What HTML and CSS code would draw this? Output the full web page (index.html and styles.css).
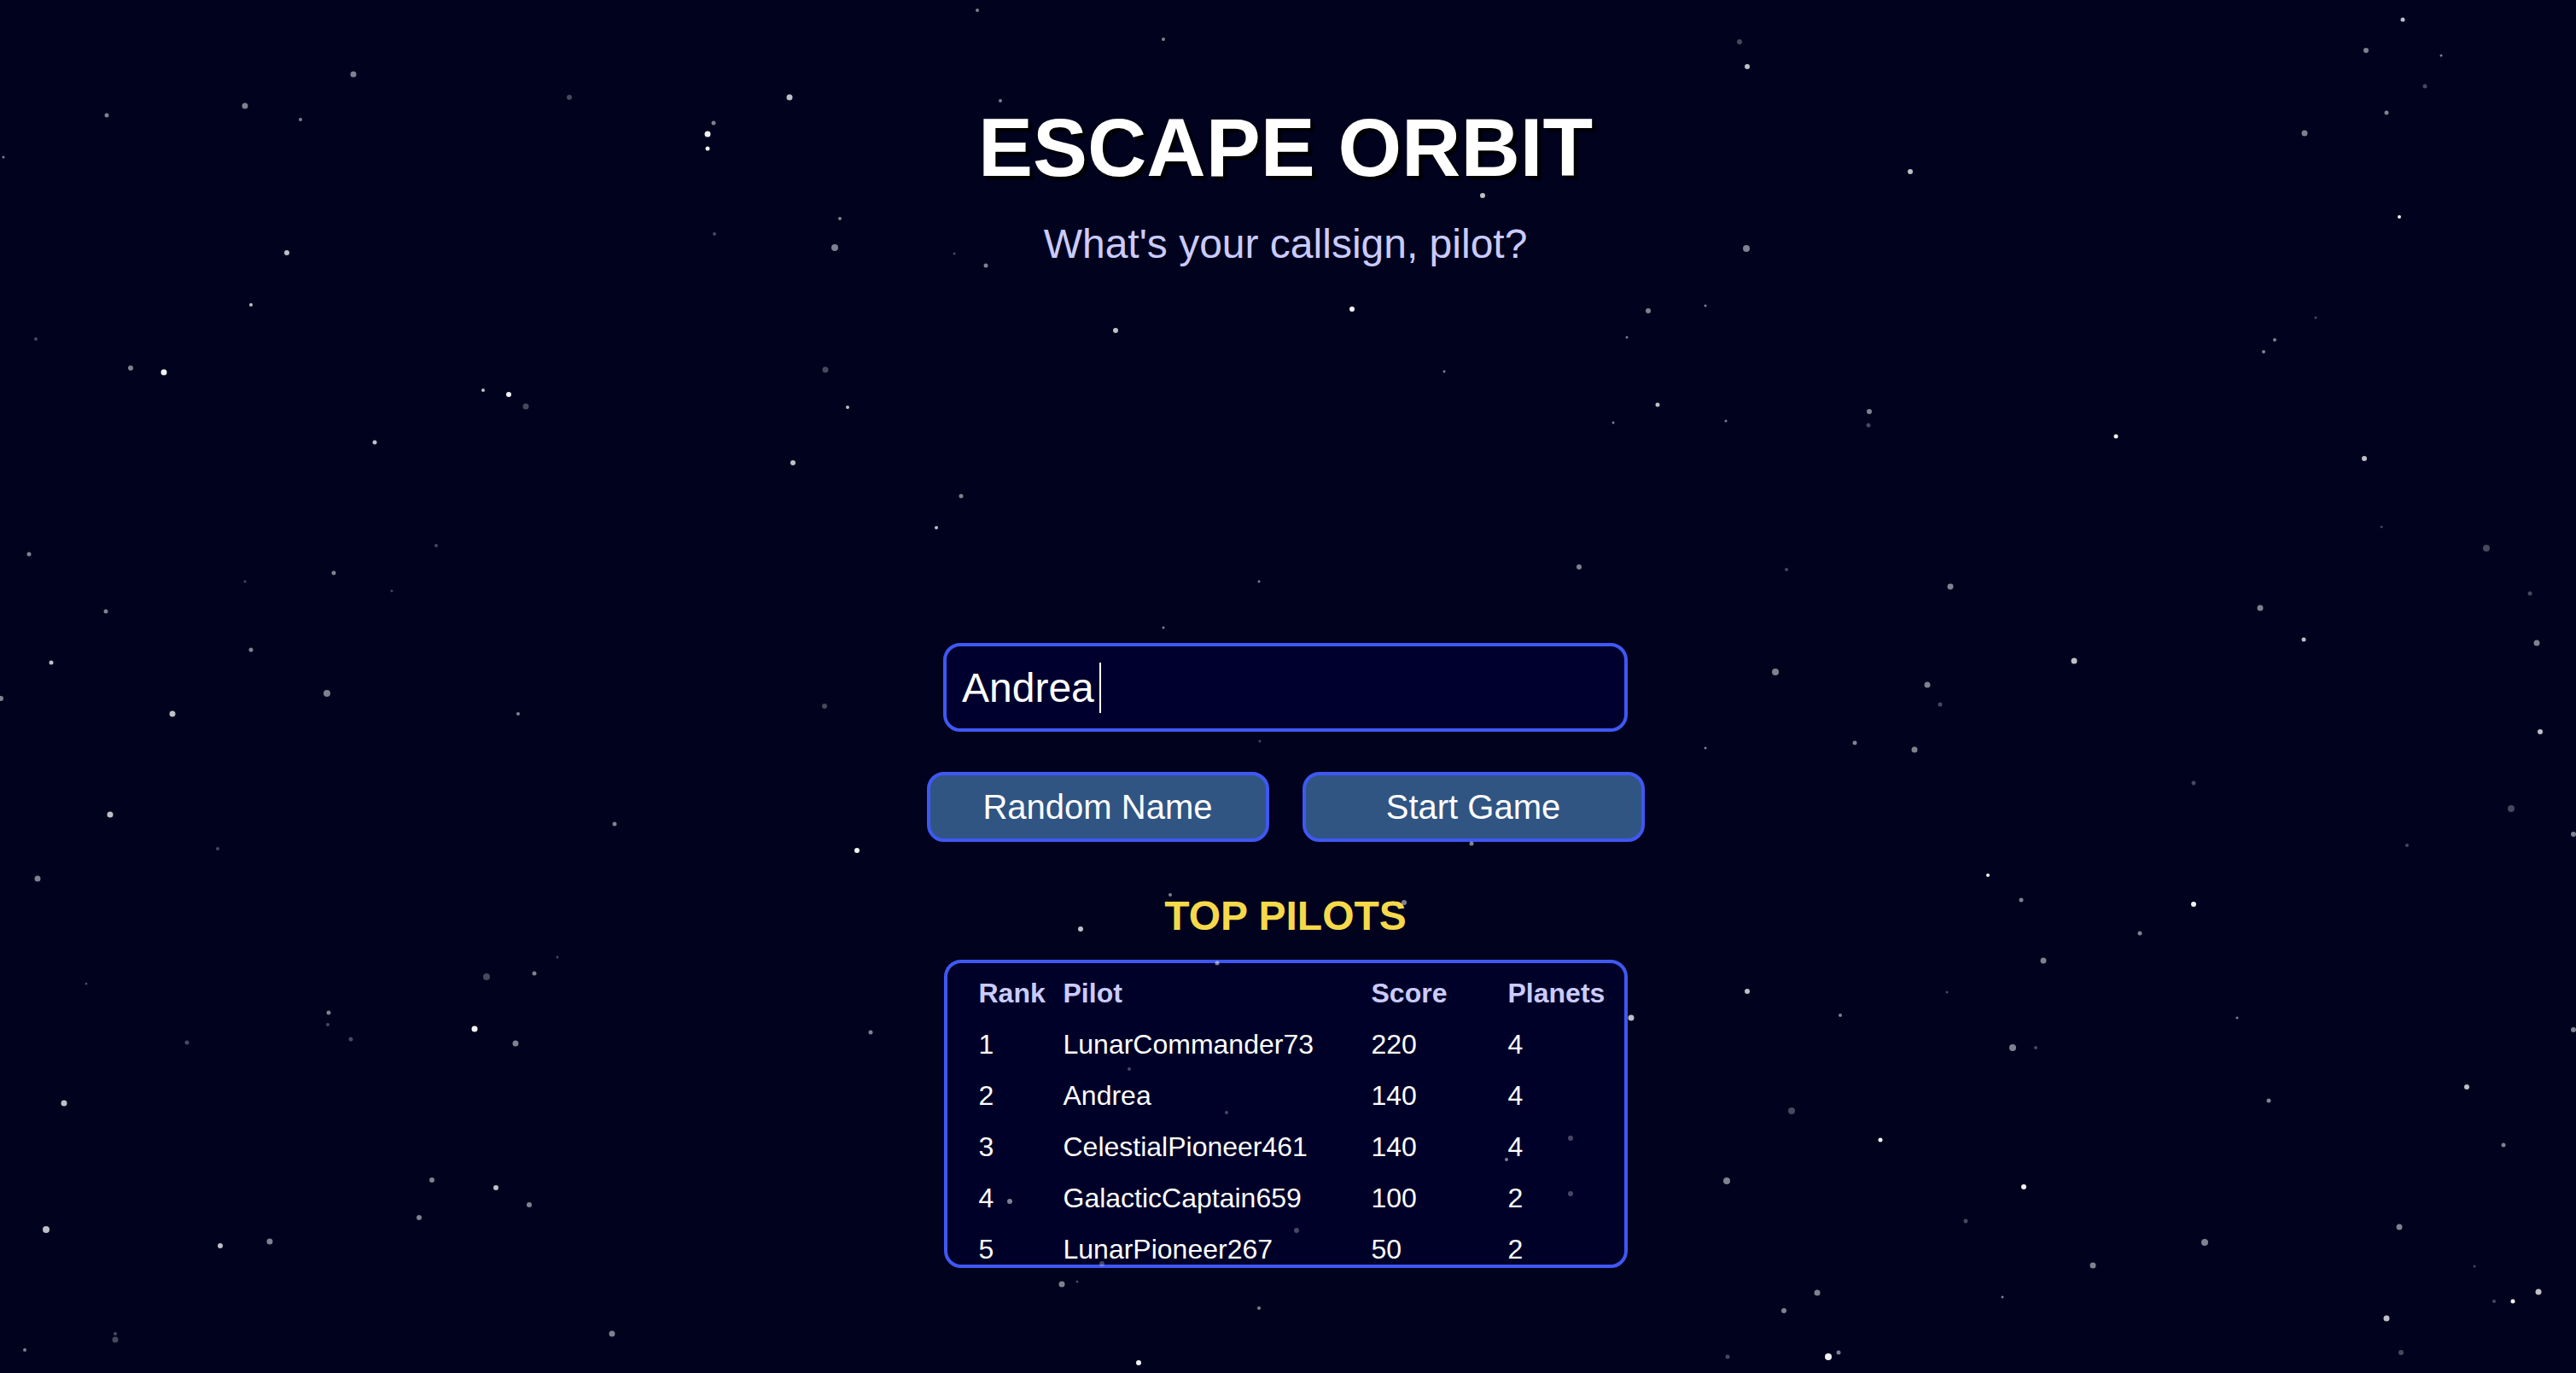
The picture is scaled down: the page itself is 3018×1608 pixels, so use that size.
FILE: index.html
```html
<!DOCTYPE html>
<html lang="en">
<head>
<meta charset="utf-8">
<title>Escape Orbit</title>
<link rel="stylesheet" href="styles.css">
</head>
<body>
<main class="menu">
  <h1 class="title">ESCAPE ORBIT</h1>
  <p class="subtitle">What's your callsign, pilot?</p>
  <div class="name-field" role="textbox" aria-label="Callsign"><span class="name-text">Andrea</span><span class="caret"></span></div>
  <div class="actions">
    <button class="btn" type="button">Random Name</button>
    <button class="btn" type="button">Start Game</button>
  </div>
  <h2 class="board-title">TOP PILOTS</h2>
  <div class="board">
    <table class="scores">
      <thead>
        <tr><th class="c-rank">Rank</th><th class="c-pilot">Pilot</th><th class="c-score">Score</th><th class="c-planets">Planets</th></tr>
      </thead>
      <tbody>
        <tr><td>1</td><td>LunarCommander73</td><td>220</td><td>4</td></tr>
        <tr><td>2</td><td>Andrea</td><td>140</td><td>4</td></tr>
        <tr><td>3</td><td>CelestialPioneer461</td><td>140</td><td>4</td></tr>
        <tr><td>4</td><td>GalacticCaptain659</td><td>100</td><td>2</td></tr>
        <tr><td>5</td><td>LunarPioneer267</td><td>50</td><td>2</td></tr>
      </tbody>
    </table>
  </div>
</main>
<svg class="stars" viewBox="0 0 3018 1608" aria-hidden="true">
  <g class="w">
    <circle cx="829" cy="157" r="3.5"/><circle cx="829" cy="174" r="2.5"/><circle cx="192" cy="436" r="3.5"/><circle cx="596" cy="462" r="3"/>
    <circle cx="2811" cy="254" r="2"/><circle cx="2479" cy="511" r="2.5"/><circle cx="1004" cy="996" r="3"/><circle cx="556" cy="1205" r="3.5"/>
    <circle cx="2329" cy="1025" r="2"/><circle cx="2570" cy="1059" r="3"/><circle cx="2203" cy="1335" r="2.5"/><circle cx="2371" cy="1390" r="3"/>
    <circle cx="2944" cy="1524" r="2.5"/><circle cx="2142" cy="1589" r="4"/><circle cx="1584" cy="362" r="3"/><circle cx="1334" cy="1596" r="3"/>
  </g>
  <g class="l">
    <circle cx="925" cy="114" r="3.5"/><circle cx="336" cy="296" r="3"/><circle cx="294" cy="357" r="2"/><circle cx="566" cy="457" r="2"/>
    <circle cx="993" cy="477" r="2"/><circle cx="439" cy="518" r="2.5"/><circle cx="929" cy="542" r="3"/><circle cx="60" cy="776" r="2.5"/>
    <circle cx="2047" cy="78" r="3"/><circle cx="2815" cy="23" r="2.5"/><circle cx="2238" cy="201" r="3"/><circle cx="2770" cy="537" r="3"/>
    <circle cx="2699" cy="749" r="2.5"/><circle cx="2430" cy="774" r="3.5"/><circle cx="202" cy="836" r="3.5"/><circle cx="129" cy="954" r="3.5"/>
    <circle cx="75" cy="1292" r="3.5"/><circle cx="581" cy="1391" r="3"/><circle cx="54" cy="1440" r="4"/><circle cx="258" cy="1459" r="3"/>
    <circle cx="2976" cy="857" r="3"/><circle cx="2047" cy="1161" r="3"/><circle cx="2890" cy="1273" r="3"/><circle cx="2974" cy="1513" r="3.5"/>
    <circle cx="2796" cy="1544" r="3.5"/><circle cx="1737" cy="229" r="3"/><circle cx="1307" cy="387" r="3"/><circle cx="1942" cy="474" r="2.5"/>
    <circle cx="1097" cy="618" r="2"/><circle cx="1266" cy="1088" r="3"/><circle cx="1911" cy="1192" r="3.5"/>
  </g>
  <g class="g">
    <circle cx="414" cy="87" r="3.5"/><circle cx="287" cy="124" r="3.5"/><circle cx="125" cy="135" r="2.5"/><circle cx="352" cy="140" r="2"/>
    <circle cx="4" cy="184" r="1.5"/><circle cx="836" cy="144" r="2.5"/><circle cx="984" cy="256" r="2"/><circle cx="978" cy="290" r="4"/>
    <circle cx="153" cy="431" r="3"/><circle cx="34" cy="649" r="2.5"/><circle cx="391" cy="671" r="2.5"/><circle cx="124" cy="716" r="2.5"/>
    <circle cx="294" cy="761" r="2.5"/><circle cx="2772" cy="59" r="3"/><circle cx="2860" cy="65" r="1.5"/><circle cx="2796" cy="132" r="2.5"/>
    <circle cx="2700" cy="156" r="3.5"/><circle cx="2046" cy="291" r="4"/><circle cx="2665" cy="398" r="2"/><circle cx="2652" cy="412" r="2"/>
    <circle cx="2022" cy="493" r="1.5"/><circle cx="2190" cy="482" r="3"/><circle cx="2285" cy="687" r="3.5"/><circle cx="2648" cy="712" r="3.5"/>
    <circle cx="2972" cy="753" r="3.5"/><circle cx="2080" cy="787" r="4"/><circle cx="2258" cy="802" r="3.5"/><circle cx="1" cy="818" r="3"/>
    <circle cx="383" cy="812" r="4"/><circle cx="607" cy="836" r="2"/><circle cx="720" cy="965" r="2.5"/><circle cx="44" cy="1029" r="3.5"/>
    <circle cx="626" cy="1140" r="2.5"/><circle cx="385" cy="1186" r="2.5"/><circle cx="604" cy="1222" r="3.5"/><circle cx="506" cy="1382" r="3"/>
    <circle cx="620" cy="1411" r="3"/><circle cx="491" cy="1426" r="3"/><circle cx="316" cy="1454" r="3.5"/><circle cx="29" cy="1581" r="2"/>
    <circle cx="717" cy="1562" r="3.5"/><circle cx="2173" cy="870" r="2.5"/><circle cx="2243" cy="878" r="3.5"/><circle cx="3015" cy="977" r="3"/>
    <circle cx="2368" cy="1054" r="2.5"/><circle cx="2507" cy="1093" r="2.5"/><circle cx="2394" cy="1125" r="3.5"/><circle cx="2156" cy="1189" r="2"/>
    <circle cx="2621" cy="1192" r="1.5"/><circle cx="2358" cy="1227" r="4"/><circle cx="3015" cy="1206" r="3"/><circle cx="2658" cy="1289" r="2.5"/>
    <circle cx="2933" cy="1341" r="2.5"/><circle cx="2023" cy="1383" r="4"/><circle cx="2811" cy="1437" r="3.5"/><circle cx="2583" cy="1455" r="4"/>
    <circle cx="2452" cy="1482" r="3.5"/><circle cx="2129" cy="1514" r="3.5"/><circle cx="2090" cy="1535" r="3"/><circle cx="2346" cy="1519" r="1.5"/>
    <circle cx="2154" cy="1584" r="2.5"/><circle cx="1145" cy="12" r="2"/><circle cx="1363" cy="46" r="2"/><circle cx="1172" cy="118" r="2"/>
    <circle cx="1155" cy="311" r="2.5"/><circle cx="1931" cy="364" r="3"/><circle cx="1906" cy="395" r="1.5"/><circle cx="1692" cy="435" r="1.5"/>
    <circle cx="1890" cy="495" r="1.5"/><circle cx="1998" cy="358" r="1.5"/><circle cx="1850" cy="664" r="3"/><circle cx="1475" cy="681" r="1.5"/>
    <circle cx="1363" cy="735" r="1.5"/><circle cx="1126" cy="581" r="2.5"/><circle cx="1998" cy="876" r="1.5"/><circle cx="1724" cy="988" r="2.5"/>
    <circle cx="1371" cy="1048" r="2"/><circle cx="1645" cy="1057" r="3"/><circle cx="1426" cy="1128" r="2.5"/><circle cx="1765" cy="1358" r="2"/>
    <circle cx="1183" cy="1407" r="3"/><circle cx="1244" cy="1504" r="3.5"/><circle cx="1475" cy="1532" r="2"/><circle cx="1020" cy="1209" r="2.5"/>
  </g>
  <g class="d">
    <circle cx="667" cy="114" r="3"/><circle cx="837" cy="274" r="2"/><circle cx="42" cy="397" r="2"/><circle cx="616" cy="476" r="3.5"/>
    <circle cx="967" cy="433" r="3.5"/><circle cx="511" cy="639" r="2"/><circle cx="287" cy="681" r="1.5"/><circle cx="459" cy="692" r="1.5"/>
    <circle cx="2038" cy="49" r="3"/><circle cx="2841" cy="101" r="2.5"/><circle cx="2713" cy="372" r="1.5"/><circle cx="2189" cy="498" r="2.5"/>
    <circle cx="2790" cy="617" r="1.5"/><circle cx="2913" cy="642" r="4"/><circle cx="2093" cy="667" r="2"/><circle cx="2964" cy="695" r="2.5"/>
    <circle cx="966" cy="827" r="3"/><circle cx="255" cy="994" r="2"/><circle cx="101" cy="1152" r="1.5"/><circle cx="653" cy="1121" r="1.5"/>
    <circle cx="570" cy="1144" r="4"/><circle cx="384" cy="1200" r="2"/><circle cx="411" cy="1217" r="2.5"/><circle cx="219" cy="1221" r="2.5"/>
    <circle cx="135" cy="1562" r="2"/><circle cx="135" cy="1569" r="3.5"/><circle cx="2273" cy="825" r="2.5"/><circle cx="2570" cy="917" r="2.5"/>
    <circle cx="2942" cy="947" r="4"/><circle cx="2820" cy="990" r="2"/><circle cx="2281" cy="1162" r="1.5"/><circle cx="2385" cy="1227" r="2"/>
    <circle cx="2099" cy="1301" r="4"/><circle cx="2303" cy="1430" r="2.5"/><circle cx="2899" cy="1483" r="1.5"/><circle cx="2922" cy="1524" r="2"/>
    <circle cx="2024" cy="1589" r="2.5"/><circle cx="2813" cy="1584" r="3"/><circle cx="1118" cy="297" r="1.5"/><circle cx="1476" cy="868" r="1.5"/>
    <circle cx="1323" cy="1252" r="2"/><circle cx="1437" cy="1303" r="2"/><circle cx="1840" cy="1333" r="3"/><circle cx="1840" cy="1398" r="3"/>
    <circle cx="1519" cy="1441" r="3"/><circle cx="1291" cy="1480" r="3"/><circle cx="1262" cy="1501" r="1.5"/>
  </g>
</svg>
</body>
</html>
```

FILE: styles.css
```css
html, body {
  margin: 0;
  height: 100%;
}

body {
  position: relative;
  background: #00021e;
  font-family: "Liberation Sans", Arial, Helvetica, sans-serif;
  color: #ffffff;
  overflow: hidden;
  padding-right: 6px;
  box-sizing: border-box;
}

.menu {
  display: flex;
  flex-direction: column;
  align-items: center;
  padding-top: 118px;
}

.title {
  margin: 0;
  font-size: 96px;
  line-height: 110px;
  font-weight: 700;
  color: #ffffff;
  text-shadow: 4px 4px 2px #000000;
}

.subtitle {
  margin: 30px 0 0;
  font-size: 48px;
  line-height: 55px;
  color: #cbcbff;
}

.name-field {
  margin-top: 440px;
  width: 802px;
  height: 104px;
  box-sizing: border-box;
  border: 4px solid #3f58f3;
  border-radius: 20px;
  background: #00002e;
  padding: 0 18px;
  display: flex;
  align-items: center;
  font-size: 48px;
  color: #ffffff;
}

.caret {
  display: block;
  width: 2px;
  height: 59px;
  margin-left: 6px;
  background: #ffffff;
}

.actions {
  margin-top: 47px;
  display: flex;
  gap: 39px;
}

.btn {
  width: 401px;
  height: 82px;
  box-sizing: border-box;
  border: 4px solid #3f58f3;
  border-radius: 20px;
  background: #305583;
  color: #ffffff;
  font-family: inherit;
  font-size: 40px;
  line-height: 46px;
  padding: 0;
}

.board-title {
  margin: 59px 0 0;
  font-size: 48px;
  line-height: 55px;
  font-weight: 700;
  color: #f6d94b;
}

.board {
  margin-top: 24px;
  width: 801px;
  height: 361px;
  box-sizing: border-box;
  border: 4px solid #3f58f3;
  border-radius: 20px;
  background: #000129;
  overflow: hidden;
  padding: 5px 0 0 37px;
}

.scores {
  border-collapse: collapse;
  table-layout: fixed;
  width: 756px;
  font-size: 32px;
}

.scores th,
.scores td {
  padding: 0;
  height: 60px;
  line-height: 60px;
  text-align: left;
  vertical-align: middle;
  white-space: nowrap;
}

.scores th {
  font-weight: 700;
  color: #cbcbff;
}

.scores td {
  color: #ffffff;
}

.c-rank { width: 99px; }
.c-pilot { width: 361px; }
.c-score { width: 160px; }
.c-planets { width: 136px; }

.stars {
  position: absolute;
  left: 0;
  top: 0;
  width: 3018px;
  height: 1608px;
  pointer-events: none;
  z-index: 5;
}

.stars .w { fill: #ffffff; fill-opacity: 0.95; }
.stars .l { fill: #ffffff; fill-opacity: 0.75; }
.stars .g { fill: #ffffff; fill-opacity: 0.5; }
.stars .d { fill: #ffffff; fill-opacity: 0.28; }
```
